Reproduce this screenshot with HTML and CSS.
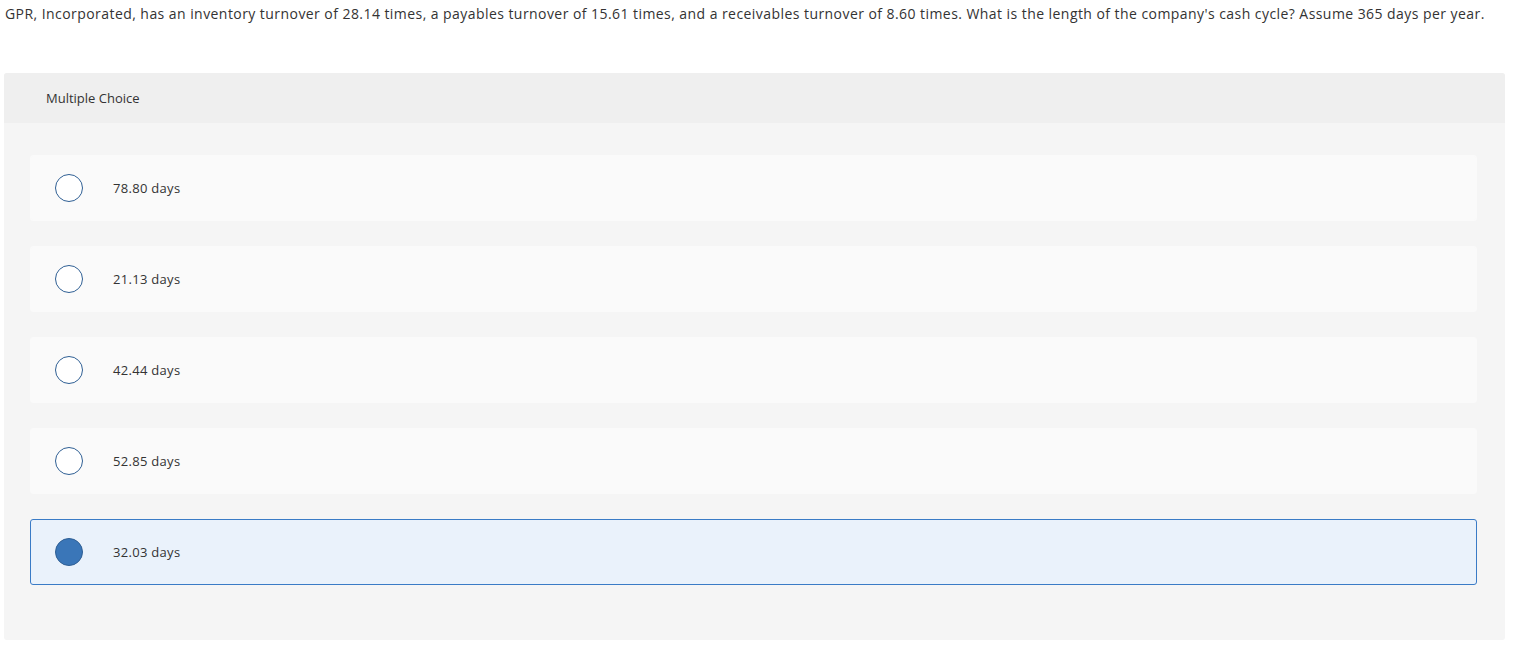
FILE: index.html
```html
<!DOCTYPE html>
<html>
<head>
<meta charset="utf-8">
<link rel="stylesheet" href="styles.css">
</head>
<body>
<p class="question">GPR, Incorporated, has an inventory turnover of 28.14 times, a payables turnover of 15.61 times, and a receivables turnover of 8.60 times. What is the length of the company's cash cycle? Assume 365 days per year.</p>
<div class="panel">
  <div class="panel-head">Multiple Choice</div>
  <div class="options">
    <div class="option"><span class="radio"></span><span class="label">78.80 days</span></div>
    <div class="option"><span class="radio"></span><span class="label">21.13 days</span></div>
    <div class="option"><span class="radio"></span><span class="label">42.44 days</span></div>
    <div class="option"><span class="radio"></span><span class="label">52.85 days</span></div>
    <div class="option selected"><span class="radio"></span><span class="label">32.03 days</span></div>
  </div>
</div>
</body>
</html>
```
FILE: styles.css
```css
html, body {
  margin: 0;
  padding: 0;
  background: #fff;
}
body {
  font-family: "Open Sans", "Liberation Sans", sans-serif;
  color: #333;
  padding: 0 15px 0 4px;
}
.question {
  margin: 0;
  padding: 4px 0 0 1px;
  font-size: 14px;
  line-height: 20px;
  color: #333;
  letter-spacing: 0.44px;
  white-space: nowrap;
}
.panel {
  margin-top: 49px;
  background: #f5f5f5;
  border-radius: 3px;
  overflow: hidden;
}
.panel-head {
  background: #efefef;
  height: 50px;
  display: flex;
  align-items: center;
  padding-left: 42px;
  font-size: 13px;
  color: #333;
}
.options {
  display: flex;
  flex-direction: column;
  gap: 25px;
  padding: 32px 28px 55px 26px;
}
.option {
  height: 66px;
  box-sizing: border-box;
  background: #fafafa;
  border: 1px solid #fafafa;
  border-radius: 3px;
  display: flex;
  align-items: center;
  padding-left: 24px;
}
.radio {
  width: 28px;
  height: 28px;
  box-sizing: border-box;
  border: 1.5px solid #2f5f94;
  border-radius: 50%;
  background: #fff;
  flex: none;
}
.label {
  margin-left: 30px;
  font-size: 13px;
  color: #333;
  letter-spacing: 0.3px;
}
.option.selected {
  background: #eaf2fb;
  border-color: #3a7bc6;
}
.option.selected .radio {
  background: #3a76b8;
  border-color: #2f5f94;
}
```
